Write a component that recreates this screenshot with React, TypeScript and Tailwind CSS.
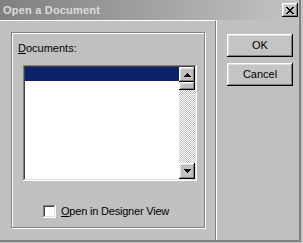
import React from "react";

const raised =
  "shadow-[inset_-1px_-1px_#000000,inset_1px_1px_#ffffff,inset_-2px_-2px_#808080,inset_2px_2px_#dfdfdf]";
const sunken =
  "shadow-[inset_-1px_-1px_#ffffff,inset_1px_1px_#808080,inset_-2px_-2px_#dfdfdf,inset_2px_2px_#404040]";

function Arrow({ up }: { up: boolean }) {
  return (
    <svg width="7" height="4" viewBox="0 0 7 4" shapeRendering="crispEdges">
      {up ? (
        <path d="M3 0h1v1h1v1h1v1h1v1H0V3h1V2h1V1h1z" fill="#000" />
      ) : (
        <path d="M0 0h7v1H6v1H5v1H4v1H3V3H2V2H1V1H0z" fill="#000" />
      )}
    </svg>
  );
}

export default function App() {
  return (
    <div
      className="w-[303px] h-[243px] bg-[#c6c6c6] overflow-hidden text-black"
      style={{ fontFamily: '"Liberation Sans", Arial, sans-serif' }}
    >
      <div className="w-[301px] h-[242px] flex flex-col bg-[#c0c0c0] border-r-2 border-b-2 border-[#808080]">
        {/* Title bar */}
        <div className="h-[20px] shrink-0 flex items-center justify-between bg-gradient-to-r from-[#808080] to-[#c4c4c4] pl-[3px] pr-[1px]">
          <span className="text-[11px] font-bold text-[#dcdcdc] tracking-[0.2px] leading-none">
            Open a Document
          </span>
          <div className={`w-[16px] h-[14px] bg-[#c0c0c0] flex items-center justify-center ${raised}`}>
            <svg width="8" height="7" viewBox="0 0 8 7" shapeRendering="crispEdges">
              <path
                d="M0 0h2v1h1v1h2V1h1V0h2v1H7v1H6v1H5v1h1v1h1v1h1v1H6V6H5V5H3v1H2v1H0V6h1V5h1V4h1V3H2V2H1V1H0z"
                fill="#000"
              />
            </svg>
          </div>
        </div>

        {/* Body */}
        <div className="flex-1 flex flex-row">
          {/* Left panel */}
          <div className="w-[216px] shrink-0 border-t border-t-white border-r border-r-[#808080] pl-[11px] pt-[11px]">
            <div className="w-[194px] h-[196px] border border-[#808080] shadow-[1px_1px_0_#ffffff,inset_1px_1px_0_#ffffff] pl-[6px] pt-[9px] flex flex-col">
              <div className="text-[11px] leading-[13px]">
                <span className="underline">D</span>ocuments:
              </div>
              <div className={`mt-[10px] ml-[5px] w-[174px] h-[116px] bg-white p-[2px] flex ${sunken}`}>
                <div className="flex-1 flex flex-col">
                  <div className="h-[14px] bg-[#0c226a]" />
                </div>
                <div className="w-[16px] flex flex-col">
                  <div className={`h-[15px] bg-[#c0c0c0] flex items-center justify-center ${raised}`}>
                    <Arrow up />
                  </div>
                  <div className={`h-[8px] bg-[#c0c0c0] ${raised}`} />
                  <div className="flex-1 bg-[repeating-conic-gradient(#ffffff_0%_25%,#c0c0c0_0%_50%)] bg-[length:2px_2px]" />
                  <div className={`h-[16px] bg-[#c0c0c0] flex items-center justify-center ${raised}`}>
                    <Arrow up={false} />
                  </div>
                </div>
              </div>
              <div className="mt-[24px] ml-[25px] flex items-center">
                <div className={`w-[13px] h-[13px] bg-white ${sunken}`} />
                <span className="ml-[5px] text-[11px] leading-[13px] tracking-[-0.2px]">
                  <span className="underline">O</span>pen in Designer View
                </span>
              </div>
            </div>
          </div>

          {/* Right panel */}
          <div className="flex-1 border-l border-l-white pl-[10px] pt-[14px] flex flex-col gap-[6px]">
            <button
              className={`w-[66px] h-[23px] bg-[#c4c4c4] text-[11px] leading-none flex items-center justify-center ${raised}`}
            >
              OK
            </button>
            <button
              className={`w-[66px] h-[23px] bg-[#c4c4c4] text-[11px] leading-none flex items-center justify-center ${raised}`}
            >
              Cancel
            </button>
          </div>
        </div>
      </div>
    </div>
  );
}
